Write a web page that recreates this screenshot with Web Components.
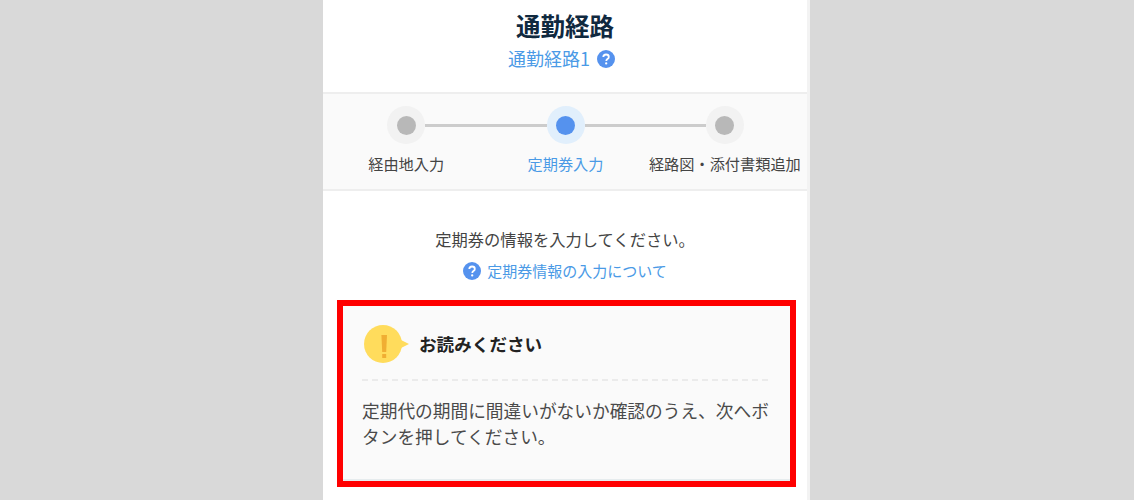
<!DOCTYPE html>
<html lang="ja">
<head>
<meta charset="utf-8">
<title>通勤経路</title>
<style>
    html, body { margin: 0; height: 500px; overflow: hidden; }
    body {
        background: #d9d9d9;
        padding-left: 323px;
        font-family: "Noto Sans CJK JP", "Noto Sans", sans-serif;
        color: #444;
    }
</style>
</head>
<body>
<route-panel>
    <route-header title-text="通勤経路" sub-text="通勤経路1"></route-header>
    <step-bar>
        <step-item label="経由地入力"></step-item>
        <step-item label="定期券入力" active></step-item>
        <step-item label="経路図・添付書類追加"></step-item>
    </step-bar>
    <route-intro>
        定期券の情報を入力してください。
        <span slot="link">定期券情報の入力について</span>
    </route-intro>
    <notice-box heading="お読みください">定期代の期間に間違いがないか確認のうえ、次へボタンを押してください。</notice-box>
</route-panel>

<script>
// Help icon: blue disc with a white question mark
class HelpIcon extends HTMLElement {
    connectedCallback() {
        if (!this.shadowRoot) this.attachShadow({ mode: 'open' });
        this.shadowRoot.innerHTML = `
            <style>
                :host { display: inline-flex; width: 18px; height: 18px; flex: none; }
                svg { width: 100%; height: 100%; display: block; }
            </style>
            <svg viewBox="0 0 18 18" aria-hidden="true">
                <circle cx="9" cy="9" r="9" fill="#5592ee"/>
                <path d="M6.3 7.1c0-1.6 1.2-2.6 2.8-2.6s2.7 1 2.7 2.4c0 1.1-.6 1.7-1.4 2.2-.7.5-1.1.9-1.1 1.8" fill="none" stroke="#fff" stroke-width="1.8"/>
                <circle cx="9.2" cy="13.4" r="1.15" fill="#fff"/>
            </svg>
        `;
    }
}
customElements.define('help-icon', HelpIcon);

class RoutePanel extends HTMLElement {
    connectedCallback() {
        if (!this.shadowRoot) this.attachShadow({ mode: 'open' });
        this.shadowRoot.innerHTML = `
            <style>
                :host {
                    display: block;
                    box-sizing: border-box;
                    width: 487px;
                    height: 500px;
                    background: #fff;
                    border-right: 3px solid #f3f3f3;
                }
            </style>
            <slot></slot>
        `;
    }
}
customElements.define('route-panel', RoutePanel);

class RouteHeader extends HTMLElement {
    connectedCallback() {
        if (!this.shadowRoot) this.attachShadow({ mode: 'open' });
        this.shadowRoot.innerHTML = `
            <style>
                :host {
                    display: flex;
                    flex-direction: column;
                    align-items: center;
                    box-sizing: border-box;
                    height: 92px;
                    padding-top: 8px;
                }
                h1 {
                    margin: 0;
                    font-size: 24.5px;
                    line-height: 36px;
                    font-weight: 700;
                    color: #10293f;
                }
                .sub {
                    display: flex;
                    align-items: center;
                    gap: 7px;
                    height: 26px;
                    margin: 2px 7px 0 0;
                    font-size: 18px;
                    color: #4a9ae6;
                }
                .sub span { padding-bottom: 2px; }
            </style>
            <h1>${this.getAttribute('title-text')}</h1>
            <div class="sub"><span>${this.getAttribute('sub-text')}</span><help-icon></help-icon></div>
        `;
    }
}
customElements.define('route-header', RouteHeader);

class StepBar extends HTMLElement {
    connectedCallback() {
        if (!this.shadowRoot) this.attachShadow({ mode: 'open' });
        this.shadowRoot.innerHTML = `
            <style>
                :host {
                    display: grid;
                    grid-template-columns: repeat(3, 1fr);
                    box-sizing: border-box;
                    height: 99px;
                    padding: 12px 2.5px 0 3.5px;
                    background: #fafafa;
                    border-top: 2px solid #eeeeee;
                    border-bottom: 2px solid #eeeeee;
                }
            </style>
            <slot></slot>
        `;
    }
}
customElements.define('step-bar', StepBar);

class StepItem extends HTMLElement {
    connectedCallback() {
        if (!this.shadowRoot) this.attachShadow({ mode: 'open' });
        this.shadowRoot.innerHTML = `
            <style>
                :host {
                    display: flex;
                    flex-direction: column;
                    align-items: center;
                    min-width: 0;
                    --halo: #f2f2f2;
                    --dot: #b8b8b8;
                    color: #444;
                }
                :host([active]) {
                    --halo: #e1effc;
                    --dot: #5592ee;
                    color: #4a9ae6;
                }
                .track {
                    display: flex;
                    align-items: center;
                    width: 100%;
                }
                .line { flex: 1; height: 3px; background: #cccccc; }
                :host(:first-child) .line.before,
                :host(:last-child) .line.after { visibility: hidden; }
                .halo {
                    display: grid;
                    place-items: center;
                    width: 38px;
                    height: 38px;
                    border-radius: 50%;
                    background: var(--halo);
                }
                .dot {
                    width: 19px;
                    height: 19px;
                    border-radius: 50%;
                    background: var(--dot);
                }
                .label {
                    margin-top: 7px;
                    font-size: 15.2px;
                    line-height: 24px;
                    white-space: nowrap;
                }
            </style>
            <div class="track">
                <div class="line before"></div>
                <div class="halo"><div class="dot"></div></div>
                <div class="line after"></div>
            </div>
            <div class="label">${this.getAttribute('label')}</div>
        `;
    }
}
customElements.define('step-item', StepItem);

class RouteIntro extends HTMLElement {
    connectedCallback() {
        if (!this.shadowRoot) this.attachShadow({ mode: 'open' });
        this.shadowRoot.innerHTML = `
            <style>
                :host {
                    display: flex;
                    flex-direction: column;
                    align-items: center;
                    padding-top: 36px;
                    font-size: 16.3px;
                    line-height: 24px;
                    color: #444;
                }
                .link {
                    display: flex;
                    align-items: center;
                    gap: 6px;
                    margin-top: 8px;
                    font-size: 15px;
                    color: #4a9ae6;
                }
            </style>
            <div><slot></slot></div>
            <div class="link"><help-icon></help-icon><slot name="link"></slot></div>
        `;
    }
}
customElements.define('route-intro', RouteIntro);

class NoticeBox extends HTMLElement {
    connectedCallback() {
        if (!this.shadowRoot) this.attachShadow({ mode: 'open' });
        this.shadowRoot.innerHTML = `
            <style>
                :host {
                    display: block;
                    box-sizing: border-box;
                    width: 459px;
                    height: 187px;
                    margin: 17px 0 0 14px;
                    border: 6px solid #ff0000;
                    background: #fafafa;
                }
                .inner {
                    box-sizing: border-box;
                    height: 100%;
                    padding: 19px 19px 0;
                    border-bottom: 2px solid #e6ecee;
                }
                .head {
                    display: flex;
                    align-items: center;
                    gap: 10px;
                    height: 38px;
                    padding-left: 2px;
                }
                svg { width: 45px; height: 38px; display: block; flex: none; }
                h2 {
                    margin: 0 0 2px;
                    font-size: 17.6px;
                    font-weight: 700;
                    color: #222;
                }
                .rule {
                    height: 2px;
                    margin-top: 16px;
                    background: repeating-linear-gradient(to right, #ebebeb 0 6px, transparent 6px 10px);
                }
                p {
                    margin: 16px 0 0;
                    font-size: 17.7px;
                    line-height: 26px;
                    color: #4a4a4a;
                }
            </style>
            <div class="inner">
                <div class="head">
                    <svg viewBox="0 0 45 38" aria-hidden="true">
                        <circle cx="19" cy="19" r="19" fill="#ffdc5c"/>
                        <path d="M36 14.5 45 19l-9 4.5z" fill="#ffdc5c"/>
                        <path d="M17.4 10h5.6l-.8 17h-4z" fill="#f0ae33"/>
                        <rect x="18.2" y="29" width="4" height="4" fill="#f0ae33"/>
                    </svg>
                    <h2>${this.getAttribute('heading')}</h2>
                </div>
                <div class="rule"></div>
                <p><slot></slot></p>
            </div>
        `;
    }
}
customElements.define('notice-box', NoticeBox);
</script>
</body>
</html>
